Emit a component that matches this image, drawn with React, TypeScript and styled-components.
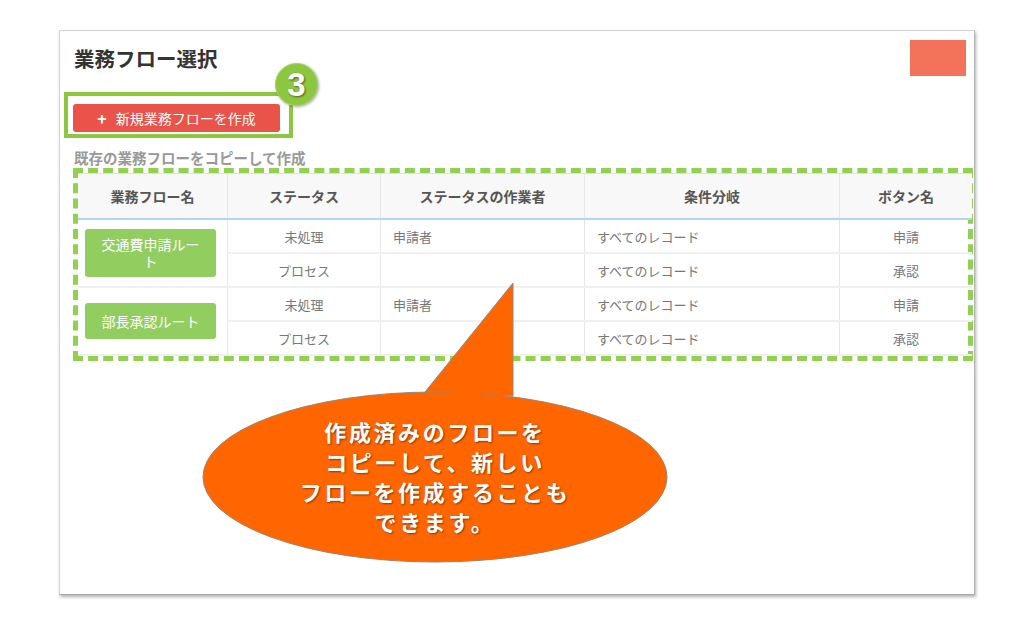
import styled, { createGlobalStyle } from "styled-components";
import { ReactElement } from "react";

const GlobalStyle = createGlobalStyle`
  body {
    margin: 0;
    background: #ffffff;
    font-family: "Noto Sans CJK JP", "Noto Sans", sans-serif;
  }
`

const Page = styled.div`
  width: 1023px;
  height: 625px;
  padding: 30px 0 0 59px;
  box-sizing: border-box;
`

const Frame = styled.div`
  position: relative;
  width: 916px;
  height: 565px;
  box-sizing: border-box;
  border: 1px solid #d4d4d4;
  border-right-color: #b5b5b5;
  border-bottom-color: #a8a8a8;
  box-shadow: 1px 2px 3px rgba(0, 0, 0, 0.3);
  padding: 9px 1px 0 13px;
  background: #fff;
`

const TitleRow = styled.div`
  display: flex;
  align-items: center;
  justify-content: space-between;
  height: 36px;
`

const Title = styled.h1`
  margin: 0 0 0 1px;
  font-size: 20.5px;
  font-weight: bold;
  color: #333;
`

const CornerBlock = styled.div`
  width: 56px;
  height: 36px;
  margin-right: 7px;
  background: #f2735a;
`

const Highlight = styled.div`
  position: relative;
  margin: 16px 0 0 -9px;
  width: 229px;
  height: 46px;
  box-sizing: border-box;
  border: 4px solid #8dc63f;
  padding: 8px 0 0 5px;
`

const CreateButton = styled.button`
  display: flex;
  align-items: center;
  justify-content: center;
  gap: 9px;
  width: 207px;
  height: 28px;
  border: none;
  border-radius: 3px;
  background: #e9534a;
  color: #fff;
  font-family: inherit;
  font-size: 14px;
  padding: 0;
`

const Plus = styled.span`
  font-size: 16px;
  font-weight: bold;
`

const Badge = styled.div`
  position: absolute;
  top: -33px;
  right: -29px;
  width: 41px;
  height: 41px;
  border-radius: 50%;
  background: #8dc63f;
  border: 1px solid #a7d66a;
  box-shadow: 1px 1px 3px rgba(0, 0, 0, 0.35);
  display: flex;
  align-items: center;
  justify-content: center;
  color: #fff;
  font-family: "Liberation Sans", Arial, sans-serif;
  font-weight: bold;
  font-size: 33px;
  text-shadow: 1px 1px 2px rgba(0, 0, 0, 0.5);
`

const Subtitle = styled.div`
  margin: 11px 0 0 1px;
  font-size: 14.5px;
  line-height: 18px;
  font-weight: bold;
  color: #999;
`

const DashedBox = styled.div`
  margin-top: 1px;
  width: 900px;
  box-sizing: border-box;
  border: 5px dashed #92d050;
`

const Table = styled.table`
  width: 890px;
  border-collapse: collapse;
  table-layout: fixed;
  color: #777;
  font-size: 13px;
`

const HeadCell = styled.th<{ $w: number }>`
  width: ${p => p.$w}px;
  height: 44px;
  background: #f8f8f8;
  color: #555;
  font-size: 14px;
  font-weight: bold;
  text-align: center;
  border-top: 1px solid #cfe6f7;
  border-left: 1px solid #e6e6e6;
  border-bottom: 2px solid #aed6f5;
  padding: 0;
  &:first-child { border-left: none; }
`

const Cell = styled.td<{ $align?: string }>`
  height: 32px;
  padding: 0 12px;
  text-align: ${p => p.$align || "center"};
  border-left: 1px solid #e6e6e6;
  border-bottom: 2px solid #f0f0f0;
  white-space: nowrap;
`

const FlowCell = styled.td`
  padding: 0 10px 0 7px;
  border-bottom: 2px solid #f0f0f0;
`

const FlowButton = styled.div`
  width: 131px;
  min-height: 36px;
  box-sizing: border-box;
  padding: 7px 12px;
  border-radius: 3px;
  background: #92cd5f;
  color: #fff;
  font-size: 14px;
  line-height: 17px;
  text-align: center;
  display: flex;
  align-items: center;
  justify-content: center;
`

const Callout = styled.div`
  position: absolute;
  left: 140px;
  top: 249px;
  width: 470px;
  height: 286px;
`

const CalloutText = styled.div`
  position: absolute;
  left: 70px;
  top: 136px;
  width: 330px;
  text-align: center;
  color: #fff;
  font-size: 22px;
  font-weight: bold;
  line-height: 30px;
  letter-spacing: 2.6px;
  text-shadow: 1px 1px 2px rgba(0, 0, 0, 0.45);
`

const flows = [
    {
        name: "交通費申請ルート",
        rows: [
            ["未処理", "申請者", "すべてのレコード", "申請"],
            ["プロセス", "", "すべてのレコード", "承認"],
        ],
    },
    {
        name: "部長承認ルート",
        rows: [
            ["未処理", "申請者", "すべてのレコード", "申請"],
            ["プロセス", "", "すべてのレコード", "承認"],
        ],
    },
]

export const App = (): ReactElement => {
    return (
        <Page>
            <GlobalStyle />
            <Frame>
                <TitleRow>
                    <Title>業務フロー選択</Title>
                    <CornerBlock />
                </TitleRow>

                <Highlight>
                    <CreateButton><Plus>+</Plus><span>新規業務フローを作成</span></CreateButton>
                    <Badge>3</Badge>
                </Highlight>

                <Subtitle>既存の業務フローをコピーして作成</Subtitle>

                <DashedBox>
                    <Table>
                        <thead>
                            <tr>
                                <HeadCell $w={149}>業務フロー名</HeadCell>
                                <HeadCell $w={152}>ステータス</HeadCell>
                                <HeadCell $w={203}>ステータスの作業者</HeadCell>
                                <HeadCell $w={254}>条件分岐</HeadCell>
                                <HeadCell $w={132}>ボタン名</HeadCell>
                            </tr>
                        </thead>
                        <tbody>
                            {flows.map(flow => flow.rows.map((r, i) => (
                                <tr key={flow.name + i}>
                                    {i === 0 && (
                                        <FlowCell rowSpan={2}>
                                            <FlowButton>{flow.name}</FlowButton>
                                        </FlowCell>
                                    )}
                                    <Cell>{r[0]}</Cell>
                                    <Cell $align="left">{r[1]}</Cell>
                                    <Cell $align="left">{r[2]}</Cell>
                                    <Cell>{r[3]}</Cell>
                                </tr>
                            )))}
                        </tbody>
                    </Table>
                </DashedBox>

                <Callout>
                    <svg width="470" height="286" viewBox="200 280 470 286">
                        <ellipse cx="435" cy="477" rx="232" ry="85" fill="#ff6600" stroke="#8a8a8a" strokeWidth="1" />
                        <polygon points="513,283 425,392 513,396" fill="#ff6600" stroke="#8a8a8a" strokeWidth="1" />
                        <ellipse cx="435" cy="477" rx="231.5" ry="84.5" fill="#ff6600" />
                    </svg>
                    <CalloutText>
                        作成済みのフローを<br />
                        コピーして、新しい<br />
                        フローを作成することも<br />
                        できます。
                    </CalloutText>
                </Callout>
            </Frame>
        </Page>
    )
}

export default App
